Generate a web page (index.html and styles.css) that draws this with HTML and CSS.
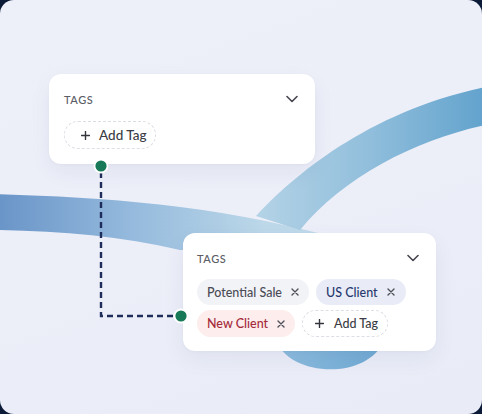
FILE: index.html
```html
<!DOCTYPE html>
<html lang="en">
<head>
<meta charset="utf-8">
<title>Tags</title>
<link rel="stylesheet" href="styles.css">
</head>
<body>
<div class="canvas">
  <svg class="ribbons" width="482" height="414" viewBox="0 0 482 414" aria-hidden="true">
    <defs>
      <linearGradient id="gBand" x1="0" y1="0" x2="330" y2="0" gradientUnits="userSpaceOnUse">
        <stop offset="0" stop-color="#6a95c8"/>
        <stop offset="0.4" stop-color="#95badd"/>
        <stop offset="0.8" stop-color="#bcd8e9"/>
        <stop offset="1" stop-color="#bfdaea"/>
      </linearGradient>
      <linearGradient id="gArch" x1="250" y1="0" x2="482" y2="0" gradientUnits="userSpaceOnUse">
        <stop offset="0" stop-color="#b6d4e7"/>
        <stop offset="0.5" stop-color="#92bfdc"/>
        <stop offset="1" stop-color="#63a3cd"/>
      </linearGradient>
      <linearGradient id="gLoop" x1="280" y1="0" x2="385" y2="0" gradientUnits="userSpaceOnUse">
        <stop offset="0" stop-color="#8dbcde"/>
        <stop offset="1" stop-color="#6fa9d3"/>
      </linearGradient>
    </defs>
    <path d="M -5 194 C 100 197, 210 204, 330 236 L 330 250 L 180 250 C 120 236, 60 231, -5 230 Z" fill="url(#gBand)"/>
    <path d="M 256 216 C 294 175, 370 110, 490 86 L 490 124 C 420 138, 345 175, 300 230 Z" fill="url(#gArch)"/>
    <path d="M 277 340 C 285 374, 364 384, 385 340 Z" fill="url(#gLoop)"/>
  </svg>

  <section class="card card-top">
    <header class="card-head">
      <span class="card-title">Tags</span>
      <svg class="chev" width="12" height="8" viewBox="0 0 12 8"><path d="M1 1.5 L6 6.5 L11 1.5" fill="none" stroke="#45464f" stroke-width="1.6" stroke-linecap="round" stroke-linejoin="round"/></svg>
    </header>
    <div class="tags">
      <span class="tag tag-add tag-lg">
        <svg class="plus" width="9" height="9" viewBox="0 0 9 9"><path d="M4.5 0.5 V8.5 M0.5 4.5 H8.5" stroke="#33343c" stroke-width="1.4" stroke-linecap="round"/></svg>
        Add Tag
      </span>
    </div>
  </section>

  <section class="card card-bottom">
    <header class="card-head">
      <span class="card-title">Tags</span>
      <svg class="chev" width="12" height="8" viewBox="0 0 12 8"><path d="M1 1.5 L6 6.5 L11 1.5" fill="none" stroke="#45464f" stroke-width="1.6" stroke-linecap="round" stroke-linejoin="round"/></svg>
    </header>
    <div class="tags">
      <span class="tag tag-gray">Potential Sale
        <svg class="x" width="8" height="8" viewBox="0 0 8 8"><path d="M1 1 L7 7 M7 1 L1 7" stroke="#50515a" stroke-width="1.4" stroke-linecap="round"/></svg>
      </span>
      <span class="tag tag-blue">US Client
        <svg class="x" width="8" height="8" viewBox="0 0 8 8"><path d="M1 1 L7 7 M7 1 L1 7" stroke="#50515a" stroke-width="1.4" stroke-linecap="round"/></svg>
      </span>
      <span class="tag tag-red">New Client
        <svg class="x" width="8" height="8" viewBox="0 0 8 8"><path d="M1 1 L7 7 M7 1 L1 7" stroke="#50515a" stroke-width="1.4" stroke-linecap="round"/></svg>
      </span>
      <span class="tag tag-add">
        <svg class="plus" width="9" height="9" viewBox="0 0 9 9"><path d="M4.5 0.5 V8.5 M0.5 4.5 H8.5" stroke="#33343c" stroke-width="1.4" stroke-linecap="round"/></svg>
        Add Tag
      </span>
    </div>
  </section>

  <svg class="connector" width="482" height="414" viewBox="0 0 482 414" aria-hidden="true">
    <path d="M101 172 V316 H175" fill="none" stroke="#1f2d5b" stroke-width="2.4" stroke-dasharray="6 4"/>
    <circle cx="101" cy="166" r="6.5" fill="#177957" stroke="#ffffff" stroke-width="1.8"/>
    <circle cx="181" cy="316" r="6.5" fill="#177957" stroke="#ffffff" stroke-width="1.8"/>
  </svg>
</div>
</body>
</html>
```

FILE: styles.css
```css
* { box-sizing: border-box; }

html, body {
  margin: 0;
  padding: 0;
  background: #0b1a36;
}

body {
  font-family: "Lato", "Noto Sans", "Liberation Sans", sans-serif;
  width: 482px;
  height: 414px;
  overflow: hidden;
}

.canvas {
  position: relative;
  width: 482px;
  height: 414px;
  border-radius: 14px;
  overflow: hidden;
  background: linear-gradient(160deg, #eef0f9 0%, #eceef8 50%, #e9ecf7 100%);
}

.ribbons,
.connector {
  position: absolute;
  left: 0;
  top: 0;
}

.card {
  position: absolute;
  background: #ffffff;
  border-radius: 12px;
  box-shadow: 0 8px 22px rgba(40, 50, 100, 0.06), 0 1px 3px rgba(40, 50, 100, 0.03);
  display: flex;
  flex-direction: column;
}

.card-top {
  left: 49px;
  top: 74px;
  width: 266px;
  height: 90px;
  padding: 15px 17px 15px 15px;
  gap: 12px;
}

.card-bottom {
  left: 183px;
  top: 233px;
  width: 253px;
  height: 118px;
  padding: 15px 17px 14px 14px;
  gap: 11px;
}

.card-head {
  display: flex;
  align-items: center;
  justify-content: space-between;
  height: 20px;
}

.card-title {
  font-size: 11px;
  text-transform: uppercase;
  letter-spacing: 0.6px;
  color: #5b5c66;
  font-weight: 500;
}

.chev { display: block; }

.tags {
  display: flex;
  flex-wrap: wrap;
  column-gap: 7px;
  row-gap: 5px;
}

.tag {
  display: inline-flex;
  align-items: center;
  height: 26px;
  border-radius: 14px;
  font-size: 12.5px;
  font-weight: 500;
  padding: 0 10px 0 10px;
  gap: 9px;
  white-space: nowrap;
}

.tag-gray { background: #f2f3f7; color: #4a4b55; }
.tag-blue { background: #e9ecf6; color: #27386f; padding-right: 11px; }
.tag-red  { background: #fdeded; color: #a42a3a; height: 27px; }

.tag-add {
  background: transparent;
  border: 1px dashed #dcdee5;
  color: #3a3b44;
  padding: 0 9px 0 12px;
  gap: 10px;
  height: 27px;
}

.tag-lg {
  height: 28px;
  font-size: 13.5px;
  padding: 0 8px 0 16px;
  gap: 9px;
}

.plus, .x { display: block; flex: none; }
```
